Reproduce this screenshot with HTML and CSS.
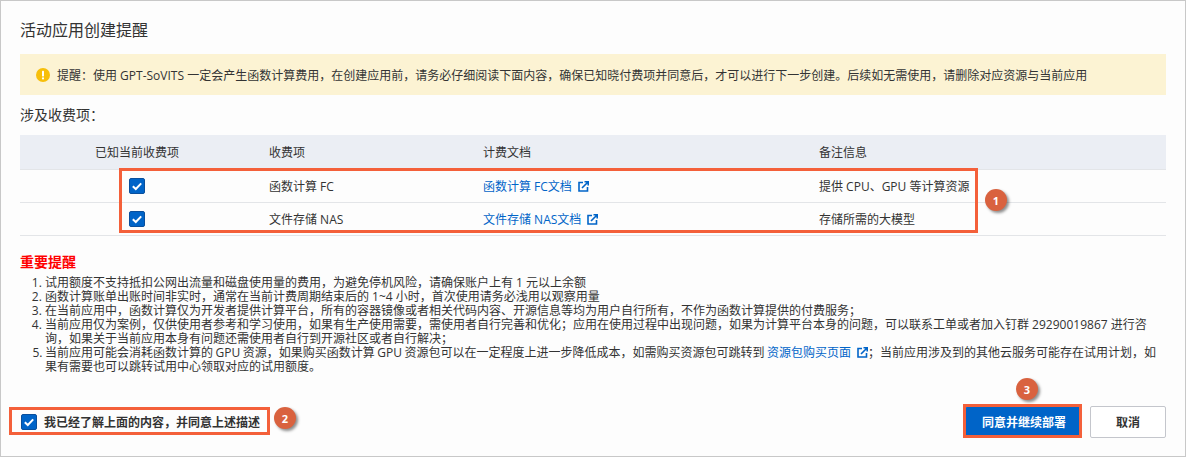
FILE: index.html
```html
<!DOCTYPE html>
<html lang="zh-CN">
<head>
<meta charset="utf-8">
<title>活动应用创建提醒</title>
<link rel="stylesheet" href="styles.css">
</head>
<body>
<svg class="defs" width="0" height="0" aria-hidden="true">
  <symbol id="check" viewBox="0 0 16 16">
    <rect x="0.5" y="0.5" width="15" height="15" rx="1.5" fill="#0064c8" stroke="#0a4f9c"/>
    <path d="M3.8 8.2 6.8 11 12.2 5.4" fill="none" stroke="#fff" stroke-width="2"/>
  </symbol>
  <symbol id="ext" viewBox="0 0 11 11">
    <path d="M5 1.5H1V10H9.5V6" fill="none" stroke="#0064c8" stroke-width="1.6"/>
    <path d="M4 7 9.5 1.5M6.5 0.8H10.2V4.5" fill="none" stroke="#0064c8" stroke-width="1.6"/>
  </symbol>
</svg>
<main class="dialog">
  <h1 class="title">活动应用创建提醒</h1>
  <div class="alert">
    <svg class="alert-icon" viewBox="0 0 14 14" aria-hidden="true">
      <circle cx="7" cy="7" r="7" fill="#f7bf0a"/>
      <rect x="6" y="2.8" width="2" height="5.6" rx="0.6" fill="#fff"/>
      <circle cx="7" cy="10.4" r="1.1" fill="#fff"/>
    </svg>
    <span>提醒：使用 GPT-SoVITS 一定会产生函数计算费用，在创建应用前，请务必仔细阅读下面内容，确保已知晓付费项并同意后，才可以进行下一步创建。后续如无需使用，请删除对应资源与当前应用</span>
  </div>
  <div class="section-label">涉及收费项：</div>
  <div class="table">
    <div class="row head">
      <div class="cell center">已知当前收费项</div>
      <div class="cell">收费项</div>
      <div class="cell">计费文档</div>
      <div class="cell">备注信息</div>
    </div>
    <div class="rows">
      <div class="row">
        <div class="cell center"><svg class="box"><use href="#check"/></svg></div>
        <div class="cell">函数计算 FC</div>
        <div class="cell"><a class="link">函数计算 FC文档<svg class="ext"><use href="#ext"/></svg></a></div>
        <div class="cell">提供 CPU、GPU 等计算资源</div>
      </div>
      <div class="row">
        <div class="cell center"><svg class="box"><use href="#check"/></svg></div>
        <div class="cell">文件存储 NAS</div>
        <div class="cell"><a class="link">文件存储 NAS文档<svg class="ext"><use href="#ext"/></svg></a></div>
        <div class="cell">存储所需的大模型</div>
      </div>
      <div class="mark mark-table"></div>
      <div class="badge badge-1">1</div>
    </div>
  </div>
  <h2 class="notice-title">重要提醒</h2>
  <ol class="notice">
    <li>试用额度不支持抵扣公网出流量和磁盘使用量的费用，为避免停机风险，请确保账户上有 1 元以上余额</li>
    <li>函数计算账单出账时间非实时，通常在当前计费周期结束后的 1~4 小时，首次使用请务必浅用以观察用量</li>
    <li>在当前应用中，函数计算仅为开发者提供计算平台，所有的容器镜像或者相关代码内容、开源信息等均为用户自行所有，不作为函数计算提供的付费服务；</li>
    <li>当前应用仅为案例，仅供使用者参考和学习使用，如果有生产使用需要，需使用者自行完善和优化；应用在使用过程中出现问题，如果为计算平台本身的问题，可以联系工单或者加入钉群 29290019867 进行咨询，如果关于当前应用本身有问题还需使用者自行到开源社区或者自行解决；</li>
    <li class="tight">当前应用可能会消耗函数计算的 GPU 资源，如果购买函数计算 GPU 资源包可以在一定程度上进一步降低成本，如需购买资源包可跳转到 <a class="link">资源包购买页面<svg class="ext"><use href="#ext"/></svg></a>；当前应用涉及到的其他云服务可能存在试用计划，如果有需要也可以跳转试用中心领取对应的试用额度。</li>
  </ol>
  <footer class="footer">
    <label class="agree">
      <svg class="box"><use href="#check"/></svg>
      <span>我已经了解上面的内容，并同意上述描述</span>
      <span class="mark mark-agree"></span>
      <span class="badge badge-2">2</span>
    </label>
    <div class="actions">
      <button class="btn primary" type="button">同意并继续部署</button>
      <button class="btn" type="button">取消</button>
      <span class="mark mark-btn"></span>
      <span class="badge badge-3">3</span>
    </div>
  </footer>
</main>
</body>
</html>
```
FILE: styles.css
```css
* { box-sizing: border-box; }
html, body { margin: 0; padding: 0; }
body {
  width: 1186px;
  height: 457px;
  overflow: hidden;
  font-family: "Open Sans", "Noto Sans CJK SC", sans-serif;
  font-size: 12px;
  color: #333;
  background: #fdfdfd;
}
.defs { position: absolute; }
.dialog {
  display: flex;
  flex-direction: column;
  height: 457px;
  padding: 17px 19px 18px;
  border: 1px solid #c8c8c8;
}
.title {
  margin: 0;
  font-size: 16px;
  font-weight: 400;
  line-height: 24px;
}
.alert {
  display: flex;
  align-items: center;
  gap: 7px;
  height: 41px;
  margin-top: 12px;
  padding-left: 16px;
  background: #fcf3d3;
}
.alert-icon { width: 14px; height: 14px; flex: none; }
.section-label {
  margin-top: 10px;
  font-size: 14px;
  line-height: 20px;
}
.table { margin-top: 10px; }
.rows { position: relative; }
.row {
  display: grid;
  grid-template-columns: 249px 214px 336px 1fr;
  height: 33px;
  border-bottom: 1px solid #e3e5e8;
}
.row.head {
  height: 35px;
  background: #ebeef4;
}
.cell {
  display: flex;
  align-items: center;
}
.cell.center {
  justify-content: center;
  padding-right: 15px;
}
.box { width: 16px; height: 16px; flex: none; }
.link { color: #0064c8; }
.ext {
  width: 11px;
  height: 11px;
  margin-left: 6px;
  vertical-align: -1px;
}
.notice-title {
  margin: 16px 0 0;
  font-size: 14px;
  font-weight: 700;
  line-height: 20px;
  color: #f00;
}
.notice {
  margin: 4px 0 0;
  padding: 0 0 0 25px;
  line-height: 14px;
}
.tight { word-spacing: -0.6px; }
.footer {
  display: flex;
  align-items: center;
  justify-content: space-between;
  margin-top: auto;
}
.agree {
  position: relative;
  display: flex;
  align-items: center;
  gap: 7px;
  margin-left: 1px;
  font-weight: 700;
}
.actions {
  position: relative;
  display: flex;
  gap: 8px;
}
.btn {
  height: 32px;
  width: 76px;
  padding: 0;
  border: 1px solid #c4c6cc;
  border-radius: 2px;
  background: #fff;
  color: #333;
  font: 700 12px "Open Sans", "Noto Sans CJK SC", sans-serif;
}
.btn.primary {
  width: 116px;
  border-color: #0064c8;
  background: #0064c8;
  color: #fff;
}
.mark {
  position: absolute;
  border: 3px solid #f4603a;
  pointer-events: none;
}
.mark-table { left: 99px; right: 188px; top: -2px; bottom: 3px; }
.mark-agree { left: -12px; right: -10px; top: -6px; bottom: -4px; }
.mark-btn { left: -3px; top: -2px; width: 119px; height: 34px; }
.badge {
  position: absolute;
  display: flex;
  align-items: center;
  justify-content: center;
  width: 22px;
  height: 22px;
  border-radius: 50%;
  background: #d9623f;
  color: #fff;
  font-size: 11px;
  font-weight: 700;
  box-shadow: 2px 2px 3px rgba(0, 0, 0, 0.45);
}
.badge-1 { left: 965px; top: 19px; }
.badge-2 { left: 253px; top: -6px; }
.badge-3 { left: 50px; top: -28px; }
```
